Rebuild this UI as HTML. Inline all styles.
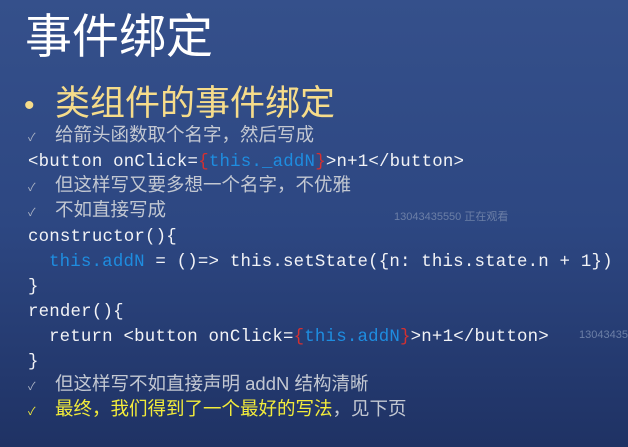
<!DOCTYPE html>
<html><head><meta charset="utf-8"><style>
body{margin:0;width:628px;height:447px;overflow:hidden;background:linear-gradient(180deg,#35508b 0%,#2d4782 50%,#1f3264 100%);font-family:"Liberation Sans","Noto Sans CJK SC",sans-serif;position:relative}
.a{position:absolute;white-space:pre;line-height:1}
.t{left:25px;top:13px;font-size:47px;color:#fff}
.h{left:24px;top:86px;font-size:35px;color:#f6dc8a}
.h b{font-weight:normal;display:inline-block;width:31px;font-size:30px}
.c{left:28px;font-size:11px;color:#aeb6c6}
.z{left:55px;font-size:18.5px;color:#c3c8d2}
.m{left:28px;font-family:"Liberation Mono",monospace;font-size:17.4px;letter-spacing:0.2px;color:#f2f3f6}
.bl{color:#1e8de0}.rd{color:#d43030}
.y{color:#f3ec3a}
.w{font-size:11px;color:#6c7fa6}
</style></head><body>
<div class="a t">事件绑定</div>
<div class="a h"><b>•</b>类组件的事件绑定</div>
<div class="a c" style="top:133px">✓</div><div class="a z" style="top:126px">给箭头函数取个名字，然后写成</div>
<div class="a m" style="top:154px">&lt;button onClick=<span class="rd">{</span><span class="bl">this._addN</span><span class="rd">}</span>&gt;n+1&lt;/button&gt;</div>
<div class="a c" style="top:183px">✓</div><div class="a z" style="top:176px">但这样写又要多想一个名字，不优雅</div>
<div class="a c" style="top:208px">✓</div><div class="a z" style="top:201px">不如直接写成</div>
<div class="a w" style="left:394px;top:212px">13043435550 正在观看</div>
<div class="a m" style="top:229px">constructor(){</div>
<div class="a m" style="top:254px;left:49px"><span class="bl">this.addN</span> = ()=&gt; this.setState({n: this.state.n + 1})</div>
<div class="a m" style="top:279px">}</div>
<div class="a m" style="top:304px">render(){</div>
<div class="a m" style="top:329px;left:49px">return &lt;button onClick=<span class="rd">{</span><span class="bl">this.addN</span><span class="rd">}</span>&gt;n+1&lt;/button&gt;</div>
<div class="a w" style="left:579px;top:330px">13043435</div>
<div class="a m" style="top:354px">}</div>
<div class="a c" style="top:382px">✓</div><div class="a z" style="top:375px">但这样写不如直接声明 addN 结构清晰</div>
<div class="a c y" style="top:407px">✓</div><div class="a z" style="top:400px"><span class="y">最终，我们得到了一个最好的写法</span>，见下页</div>
</body></html>
